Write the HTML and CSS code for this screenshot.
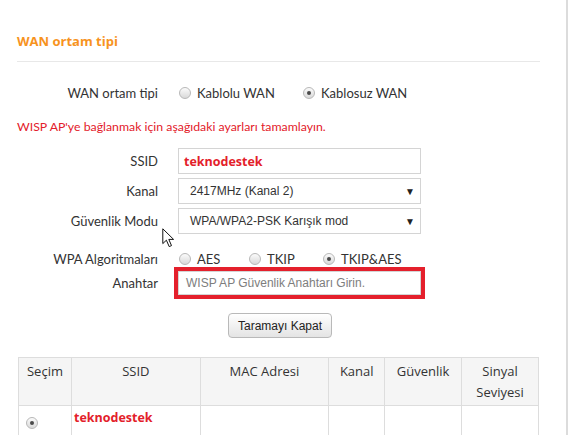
FILE: index.html
```html
<!DOCTYPE html>
<html lang="tr">
<head>
<meta charset="utf-8">
<title>WAN ortam tipi</title>
<link rel="stylesheet" href="styles.css">
</head>
<body>
<div class="page">
  <h2 class="title">WAN ortam tipi</h2>
  <div class="divider"></div>

  <div class="row row-wan">
    <span class="label">WAN ortam tipi</span>
    <div class="radios">
      <span class="opt opt-kablolu"><span class="radio"></span>Kablolu WAN</span>
      <span class="opt"><span class="radio checked"></span>Kablosuz WAN</span>
    </div>
  </div>

  <p class="notice">WISP AP'ye bağlanmak için aşağıdaki ayarları tamamlayın.</p>

  <div class="row row-field row-first">
    <span class="label">SSID</span>
    <div class="input text"><span class="ssid">teknodestek</span></div>
  </div>
  <div class="row row-field">
    <span class="label">Kanal</span>
    <div class="input select"><span>2417MHz (Kanal 2)</span><span class="arrow">▼</span></div>
  </div>
  <div class="row row-field">
    <span class="label">Güvenlik Modu</span>
    <div class="input select"><span>WPA/WPA2-PSK Karışık mod</span><span class="arrow">▼</span></div>
  </div>

  <div class="row row-wpa">
    <span class="label">WPA Algoritmaları</span>
    <div class="radios">
      <span class="opt opt-aes"><span class="radio"></span>AES</span>
      <span class="opt opt-tkip"><span class="radio"></span>TKIP</span>
      <span class="opt"><span class="radio checked"></span>TKIP&amp;AES</span>
    </div>
  </div>

  <div class="row row-key">
    <span class="label">Anahtar</span>
    <div class="input key"><span class="placeholder">WISP AP Güvenlik Anahtarı Girin.</span></div>
  </div>

  <div class="btn-row"><span class="btn">Taramayı Kapat</span></div>

  <table class="scan">
    <thead>
      <tr>
        <th class="c1">Seçim</th>
        <th class="c2">SSID</th>
        <th class="c3">MAC Adresi</th>
        <th class="c4">Kanal</th>
        <th class="c5">Güvenlik</th>
        <th class="c6">Sinyal<br>Seviyesi</th>
      </tr>
    </thead>
    <tbody>
      <tr>
        <td class="sel"><span class="radio checked"></span></td>
        <td class="tssid">teknodestek</td>
        <td></td><td></td><td></td><td></td>
      </tr>
    </tbody>
  </table>

  <svg class="cursor" width="13" height="20" viewBox="0 0 13 20">
    <path d="M0.8 0.8 L0.8 15.6 L4.4 12.2 L7.2 18.6 L9.5 17.6 L6.8 11.4 L11.6 11.4 Z" fill="#fff" stroke="#111" stroke-width="1" stroke-linejoin="round"/>
  </svg>
</div>
</body>
</html>
```
FILE: styles.css
```css
* { box-sizing: border-box; }
html, body { margin: 0; padding: 0; background: #fff; }
body { font-family: "Lato", "Open Sans", sans-serif; color: #333; }

.page {
  position: relative;
  width: 568px;
  height: 435px;
  overflow: hidden;
  border-right: 2px solid #dcdcdc;
}

.title {
  margin: 0;
  padding: 32px 0 0 17px;
  height: 50px;
  font-family: "Open Sans", sans-serif;
  font-size: 13px;
  font-weight: 700;
  color: #f7931e;
  line-height: 18px;
}

.divider {
  margin: 11px 0 0 17px;
  width: 523px;
  height: 1px;
  background: #e8e8e8;
}

.row { display: flex; align-items: center; }
.label {
  width: 158px;
  margin-right: 20px;
  text-align: right;
  font-size: 13px;
  color: #333;
  white-space: nowrap;
}

.row-wan { margin-top: 17px; height: 28px; }
.radios { display: flex; align-items: center; font-size: 13px; color: #333; padding-left: 1px; }
.opt { display: inline-flex; align-items: center; white-space: nowrap; }
.opt .radio { margin-right: 6px; }
.opt-kablolu { width: 124px; }
.opt-aes { width: 70px; }
.opt-tkip { width: 74px; }

.radio {
  display: inline-block;
  width: 12px;
  height: 12px;
  border-radius: 50%;
  border: 1px solid #b8b8b8;
  background: linear-gradient(#fbfbfb, #d9d9d9);
  position: relative;
  flex: none;
}
.radio.checked::after {
  content: "";
  position: absolute;
  left: 3px; top: 3px;
  width: 4px; height: 4px;
  border-radius: 50%;
  background: #4a4a4a;
}

.notice {
  margin: 11px 0 0 17px;
  height: 18px;
  line-height: 18px;
  font-size: 12.3px;
  color: #e3202a;
}

.row-field { margin-top: 4px; height: 26px; }
.row-first { margin-top: 12px; }

.input {
  width: 243px;
  height: 26px;
  border: 1px solid #d4d4d4;
  background: #fff;
  display: flex;
  align-items: center;
  padding: 0 5px 0 11px;
  font-family: "Liberation Sans", Arial, sans-serif;
  font-size: 12px;
  color: #333;
}
.text { padding-left: 5px; }
.ssid {
  font-family: "Open Sans", sans-serif;
  font-weight: 700;
  font-size: 12.5px;
  color: #e3202a;
}
.select { justify-content: space-between; }
.arrow { font-size: 10px; color: #222; }

.row-wpa { margin-top: 14px; height: 22px; }

.row-key { margin-top: 1px; height: 24px; }
.key {
  height: 24px;
  border: 1px solid #d4d4d4;
  outline: 4px solid #e4202c;
  outline-offset: 0;
  padding-left: 7px;
}
.placeholder { color: #7d7d7d; }

.btn-row { margin-top: 18px; padding-left: 228px; height: 25px; }
.btn {
  display: inline-flex;
  align-items: center;
  justify-content: center;
  width: 104px;
  height: 25px;
  border: 1px solid #b9b9b9;
  border-radius: 4px;
  background: linear-gradient(#ffffff, #e4e4e4);
  font-family: "Liberation Sans", Arial, sans-serif;
  font-size: 12px;
  color: #222;
}

.scan {
  margin: 19px 0 0 18px;
  width: 521px;
  border-collapse: collapse;
  font-family: "Open Sans", sans-serif;
  font-size: 13px;
  color: #333;
}
.scan th, .scan td {
  border: 1px solid #dddddd;
  vertical-align: top;
  text-align: center;
  font-weight: 400;
  line-height: 21px;
}
.scan th { background: #f5f5f5; padding: 3px 4px 2px; height: 48px; }
.scan td { height: 34px; padding: 1px 2px; }
.c1 { width: 53px; }
.c2 { width: 129px; }
.c3 { width: 129px; }
.c4 { width: 56px; }
.c5 { width: 77px; }
.c6 { width: 77px; }
.scan td.sel { text-align: left; }
.sel .radio { margin: 10px 0 0 5px; }
.scan td.tssid {
  text-align: left;
  padding-left: 2px;
  font-weight: 700;
  color: #e3202a;
  font-size: 12.5px;
}

.cursor { position: absolute; left: 162px; top: 228px; }
```
